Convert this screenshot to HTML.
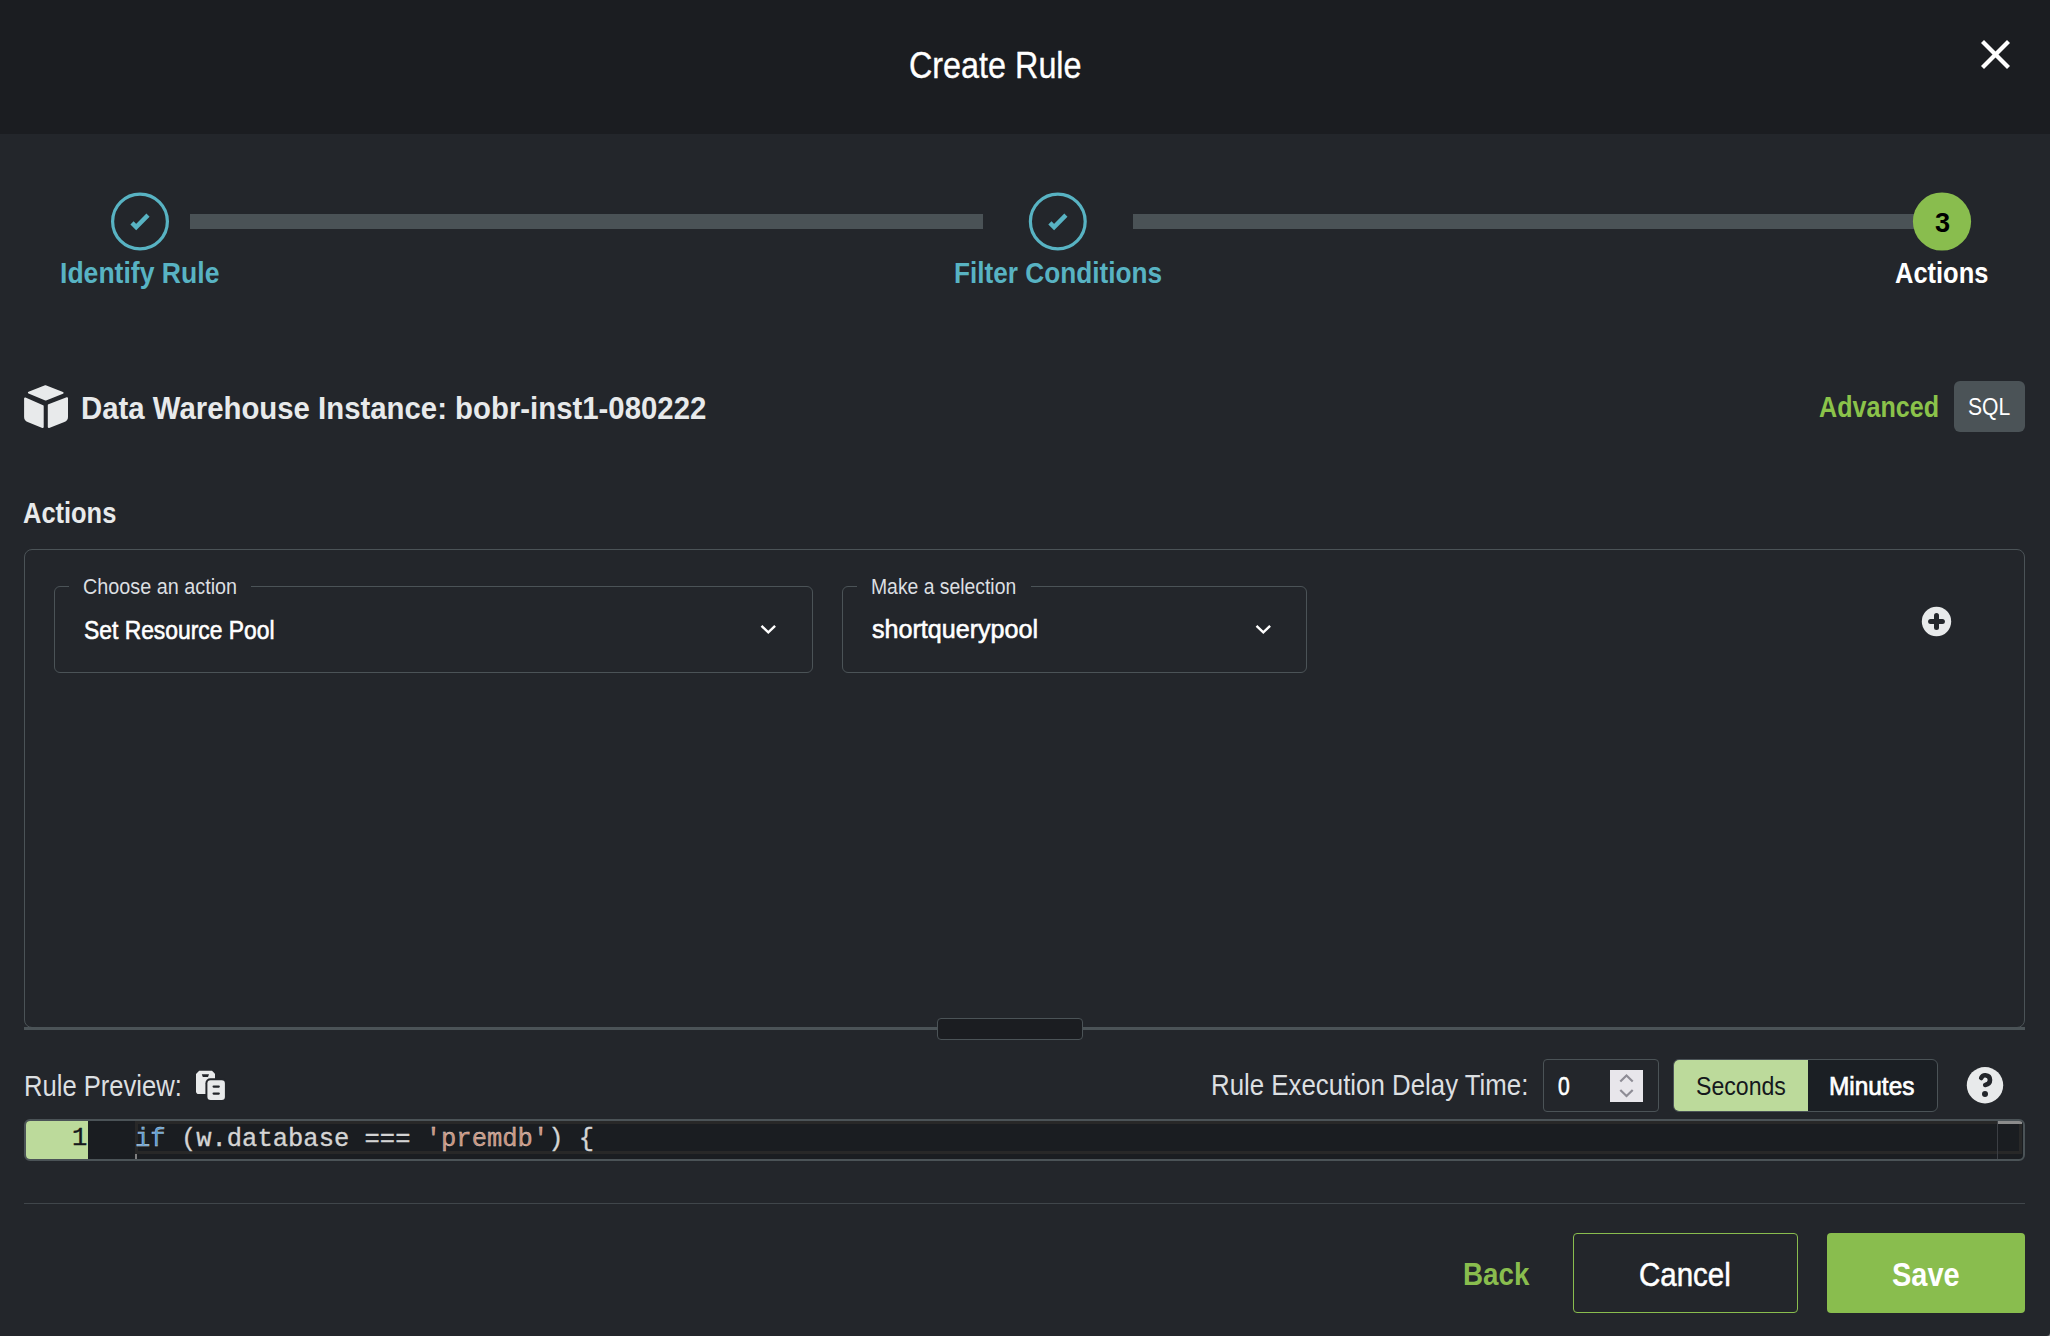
<!DOCTYPE html>
<html><head><meta charset="utf-8"><title>Create Rule</title>
<style>
html,body{margin:0;padding:0}
body{width:2050px;height:1336px;background:#23262b;position:relative;overflow:hidden;font-family:"Liberation Sans",sans-serif}
.a{position:absolute;box-sizing:border-box}
.t{position:absolute;white-space:nowrap;line-height:1;transform-origin:0 0}
.m{font-family:"Liberation Mono",monospace}

</style></head><body>
<div class="a" style="left:0;top:0;width:2050px;height:134px;background:#1b1d21"></div>
<svg class="a" style="left:0;top:0" width="2050" height="1336" viewBox="0 0 2050 1336">
 <g stroke="#ffffff" stroke-width="4.2" fill="none">
  <line x1="1982.5" y1="41.5" x2="2008.5" y2="67.5"/><line x1="2008.5" y1="41.5" x2="1982.5" y2="67.5"/>
 </g>
 <rect x="190" y="214" width="793" height="15" fill="#4a5256"/>
 <rect x="1133" y="214" width="790" height="15" fill="#4a5256"/>
 <circle cx="140" cy="221.5" r="27.4" fill="none" stroke="#58b3c3" stroke-width="3.2"/>
 <circle cx="1057.8" cy="221.5" r="27.4" fill="none" stroke="#58b3c3" stroke-width="3.2"/>
 <polyline points="132,222.8 136.2,227 148,215.2" fill="none" stroke="#58b3c3" stroke-width="4.5"/>
 <polyline points="1049.9,222.8 1054.1,227 1065.9,215.2" fill="none" stroke="#58b3c3" stroke-width="4.5"/>
 <circle cx="1942" cy="221.5" r="29.1" fill="#89bd4e"/>
 <g fill="#e8eaeb" stroke="#e8eaeb" stroke-width="2" stroke-linejoin="round">
  <path d="M45.4,386.2 L62.6,392.9 L45.7,399.5 L28.9,392.6 Z"/>
  <path d="M25.1,398.5 L42.7,406.2 L42.7,427 L28,421 Q25.1,420 25.1,417 Z"/>
  <path d="M48.8,405.2 L67,398.2 L67,417 Q67,420 64,421 L48.8,427 Z"/>
 </g>
 <circle cx="1936.5" cy="621.5" r="14.7" fill="#e8eaeb"/>
 <g stroke="#23262b" stroke-width="5" stroke-linecap="round"><line x1="1930.6" y1="621.5" x2="1942.4" y2="621.5"/><line x1="1936.5" y1="615.6" x2="1936.5" y2="627.4"/></g>
 <g fill="none" stroke="#ffffff" stroke-width="2.4"><polyline points="761.5,625.8 768.3,632.4 775.1,625.8"/><polyline points="1256.5,625.8 1263.3,632.4 1270.1,625.8"/></g>
</svg>
<div class="a" style="left:1954px;top:381px;width:71px;height:51px;background:#4b5357;border-radius:6px"></div>
<div class="a" style="left:24px;top:549px;width:2001px;height:479px;border:1px solid #4b5357;border-radius:8px"></div>
<div class="a" style="left:24px;top:1027px;width:2001px;height:3px;background:#4b5357"></div>
<div class="a" style="left:937px;top:1018px;width:146px;height:22px;background:#1b1d21;border:1px solid #4b5357;border-radius:4px"></div>
<div class="a" style="left:54px;top:586px;width:759px;height:87px;border:1px solid #4b5357;border-radius:6px"></div>
<div class="a" style="left:69px;top:584px;width:182px;height:4px;background:#23262b"></div>
<div class="a" style="left:842px;top:586px;width:465px;height:87px;border:1px solid #4b5357;border-radius:6px"></div>
<div class="a" style="left:857px;top:584px;width:174px;height:4px;background:#23262b"></div>
<svg class="a" style="left:0;top:0" width="2050" height="1336" viewBox="0 0 2050 1336">
 <g fill="#e8eaeb">
  <path d="M199.2,1070.8 H212 L215,1073.8 V1094 H198.8 Q196,1094 196,1091.2 V1073.9 Z"/>
 </g>
 <path d="M201.8,1074.2 H209 L208,1076.9 H202.8 Z" fill="#23262b"/>
 <rect x="205.4" y="1078.3" width="21.5" height="23.6" rx="5" fill="#23262b"/>
 <rect x="207.4" y="1080.3" width="17.5" height="19.6" rx="3.2" fill="#e8eaeb"/>
 <g stroke="#23262b" stroke-width="2.2" stroke-linecap="round"><line x1="213.6" y1="1086.6" x2="218.8" y2="1086.6"/><line x1="213.6" y1="1093.6" x2="218.8" y2="1093.6"/></g>
 <circle cx="1985" cy="1085.2" r="18.2" fill="#e8eaeb"/>
 <path d="M1981.2,1078 Q1982.6,1075 1985.5,1075.3 Q1990,1075.8 1990,1080 Q1990,1084 1985.2,1084.9" fill="none" stroke="#23262b" stroke-width="4.6" stroke-linecap="round"/>
 <circle cx="1985" cy="1094" r="3" fill="#23262b"/>
</svg>
<div class="a" style="left:1543px;top:1059px;width:116px;height:53px;border:1px solid #4b5357;border-radius:4px"></div>
<div class="a" style="left:1610px;top:1070px;width:33px;height:32px;background:#e8e6eb"></div>
<svg class="a" style="left:0;top:0" width="2050" height="1336" viewBox="0 0 2050 1336">
 <g fill="none" stroke="#8e8c95" stroke-width="2.2"><polyline points="1620.3,1081.5 1626.5,1075.5 1632.7,1081.5"/><polyline points="1620.3,1090 1626.5,1096 1632.7,1090"/></g>
</svg>
<div class="a" style="left:1673px;top:1059px;width:265px;height:53px;border:1px solid #4b5357;border-radius:6px;background:#1b1f24;overflow:hidden"><div class="a" style="left:0;top:0;width:134px;height:51px;background:#bcda9b"></div></div>
<div class="a" style="left:24px;top:1119px;width:2001px;height:42px;border:2px solid #4b5357;border-radius:6px;background:#1a1d21;overflow:hidden">
 <div class="a" style="left:0;top:0;width:62px;height:38px;background:#bcda9b"></div>
 <div class="a" style="left:109px;top:0;width:1887px;height:33px;border:3px solid #282828"></div>
 <div class="a" style="left:109px;top:33px;width:2px;height:5px;background:#808080"></div>
 <div class="a" style="left:1971px;top:0;width:1px;height:38px;background:#3c3f44"></div>
 <div class="a" style="left:1972px;top:0;width:24px;height:3px;background:#8c8c8c"></div>
</div>
<svg class="a" style="left:2040px;top:1326px" width="10" height="10" viewBox="0 0 10 10"><path d="M10,6.5 A3.5,3.5 0 0 1 6.5,10 L10,10 Z" fill="#9a9a9a"/></svg>
<div class="a" style="left:24px;top:1203px;width:2001px;height:1px;background:#40464b"></div>
<div class="a" style="left:1573px;top:1233px;width:225px;height:80px;border:1.5px solid #89bd4e;border-radius:4px"></div>
<div class="a" style="left:1827px;top:1233px;width:198px;height:80px;background:#89bd4e;border-radius:4px"></div>
<div class="t m" id="gut" style="left:72px;top:1126.3px;font-size:25.5px;color:#15181c;-webkit-text-stroke:0.4px #15181c">1</div>
<div class="t m" id="code" style="left:135px;top:1127.1px;font-size:25.5px;color:#d4d4d4;-webkit-text-stroke:0.35px #d4d4d4"><span style="color:#569cd6">if</span> (w.database === <span style="color:#ce9178">'premdb'</span>) {</div>
<div class="t" id="title" style="left:909.21px;top:48.23px;font-size:36.34px;font-weight:400;color:#ffffff;transform:scaleX(0.8901);-webkit-text-stroke:0.35px #fff;">Create Rule</div>
<div class="t" id="s1" style="left:60.15px;top:258.63px;font-size:28.78px;font-weight:700;color:#58b3c3;transform:scaleX(0.9235);">Identify Rule</div>
<div class="t" id="s2" style="left:954.23px;top:258.49px;font-size:29.65px;font-weight:700;color:#58b3c3;transform:scaleX(0.8836);">Filter Conditions</div>
<div class="t" id="s3" style="left:1895.12px;top:259.39px;font-size:29.07px;font-weight:700;color:#ffffff;transform:scaleX(0.8762);">Actions</div>
<div class="t" id="n3" style="left:1935.00px;top:208.59px;font-size:27.18px;font-weight:700;color:#000000;transform:scaleX(1.0000);">3</div>
<div class="t" id="dw" style="left:81.20px;top:391.92px;font-size:31.98px;font-weight:700;color:#e8eaeb;transform:scaleX(0.9182);">Data Warehouse Instance: bobr-inst1-080222</div>
<div class="t" id="adv" style="left:1819.17px;top:392.40px;font-size:30.23px;font-weight:700;color:#8bc34a;transform:scaleX(0.8310);">Advanced</div>
<div class="t" id="sql" style="left:1968.15px;top:394.78px;font-size:24.71px;font-weight:400;color:#ffffff;transform:scaleX(0.8542);">SQL</div>
<div class="t" id="acth" style="left:23.12px;top:498.63px;font-size:28.78px;font-weight:700;color:#e8eaeb;transform:scaleX(0.8846);">Actions</div>
<div class="t" id="lg1" style="left:83.12px;top:575.54px;font-size:21.80px;font-weight:400;color:#dcdfe1;transform:scaleX(0.9081);">Choose an action</div>
<div class="t" id="v1" style="left:84.12px;top:618.29px;font-size:25.87px;font-weight:400;color:#ffffff;transform:scaleX(0.8836);-webkit-text-stroke:0.6px #fff;">Set Resource Pool</div>
<div class="t" id="lg2" style="left:871.00px;top:575.54px;font-size:21.80px;font-weight:400;color:#dcdfe1;transform:scaleX(0.8876);">Make a selection</div>
<div class="t" id="v2" style="left:872.00px;top:617.39px;font-size:25.87px;font-weight:400;color:#ffffff;transform:scaleX(0.9706);-webkit-text-stroke:0.6px #fff;">shortquerypool</div>
<div class="t" id="rp" style="left:24.05px;top:1072.03px;font-size:28.78px;font-weight:400;color:#dcdfe1;transform:scaleX(0.8896);">Rule Preview:</div>
<div class="t" id="red" style="left:1211.21px;top:1071.21px;font-size:28.92px;font-weight:400;color:#dcdfe1;transform:scaleX(0.8940);">Rule Execution Delay Time:</div>
<div class="t" id="zero" style="left:1558.44px;top:1074.39px;font-size:25.29px;font-weight:400;color:#ffffff;transform:scaleX(0.8338);-webkit-text-stroke:0.6px #fff;">0</div>
<div class="t" id="sec" style="left:1696.09px;top:1074.06px;font-size:25.44px;font-weight:400;color:#15181c;transform:scaleX(0.9083);">Seconds</div>
<div class="t" id="min" style="left:1829.05px;top:1074.06px;font-size:25.44px;font-weight:400;color:#ffffff;transform:scaleX(0.9587);-webkit-text-stroke:0.7px #fff;">Minutes</div>
<div class="t" id="back" style="left:1463.12px;top:1258.08px;font-size:32.27px;font-weight:700;color:#89bd4e;transform:scaleX(0.8601);">Back</div>
<div class="t" id="cancel" style="left:1639.15px;top:1258.59px;font-size:32.85px;font-weight:400;color:#ffffff;transform:scaleX(0.8980);-webkit-text-stroke:0.5px #fff;">Cancel</div>
<div class="t" id="save" style="left:1892.12px;top:1258.59px;font-size:32.85px;font-weight:700;color:#ffffff;transform:scaleX(0.8828);">Save</div>
</body></html>
